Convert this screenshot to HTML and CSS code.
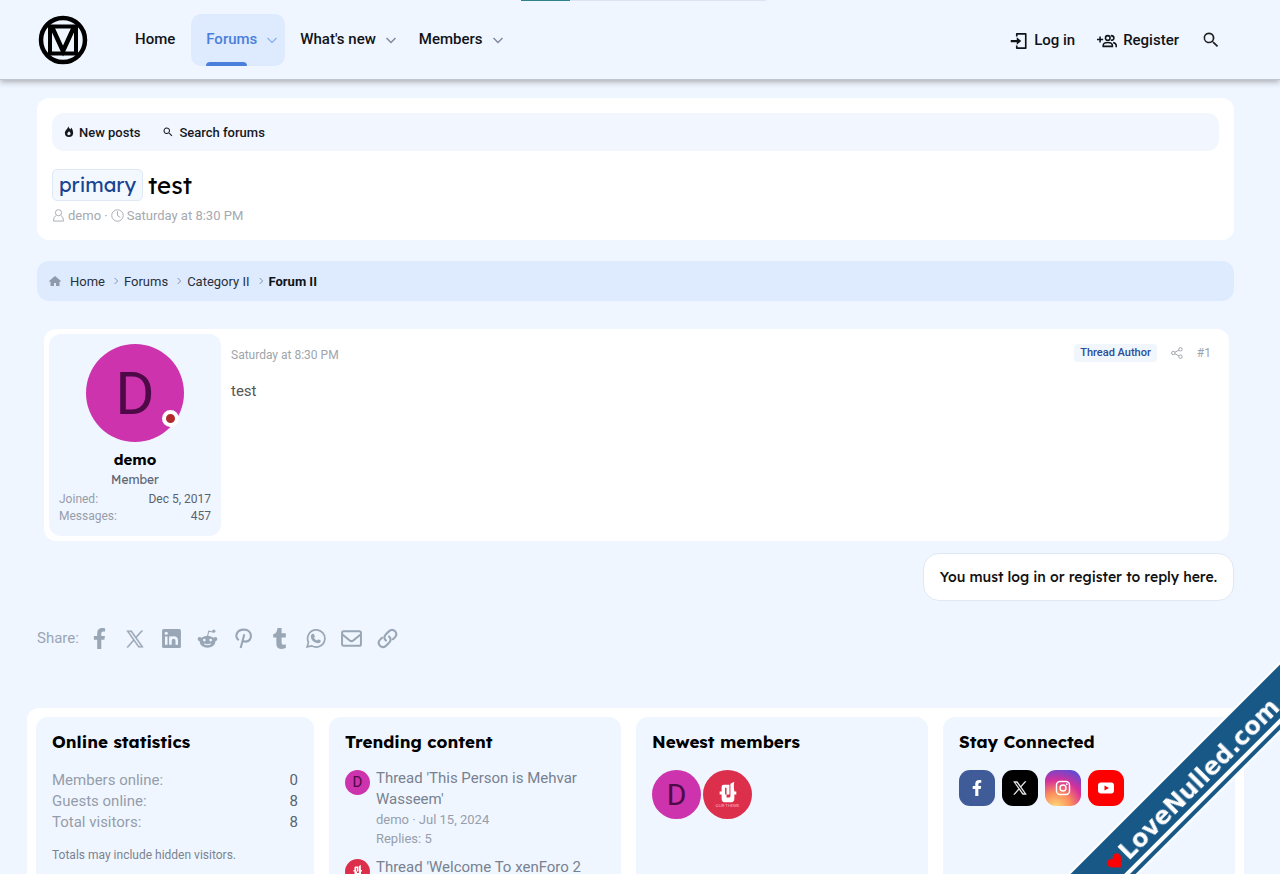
FILE: index.html
```html
<!DOCTYPE html>
<html lang="en">
<head>
<meta charset="utf-8">
<title>test | Forum II</title>
<link rel="stylesheet" href="styles.css">
</head>
<body>
<svg class="defs" aria-hidden="true">
  <defs>
    <symbol id="chev" viewBox="0 0 12 12"><path d="M1.500 4 6 8.500 10.500 4" fill="none" stroke="currentColor" stroke-width="1.500"/></symbol>
    <symbol id="search" viewBox="0 0 24 24"><path fill="currentColor" d="M9.500 3a6.500 6.500 0 0 1 5 10.700l.3.300h.8l5 5-1.500 1.500-5-5v-.8l-.3-.3A6.500 6.500 0 1 1 9.500 3m0 2a4.500 4.500 0 1 0 0 9 4.500 4.500 0 0 0 0-9"/></symbol>
    <symbol id="fb" viewBox="0 0 320 512"><path fill="currentColor" d="M279 288l14-93h-89v-60c0-25 12-50 52-50h41V7s-37-7-72-7C152 0 104 44 104 125v70H23v93h81v224h100V288z"/></symbol>
    <symbol id="x" viewBox="0 0 24 24"><path stroke="currentColor" stroke-width=".7" fill="currentColor" d="M14.100 10.300 22.300 1h-2l-7.100 8.100L7.500 1H1l8.600 12.200L1 23h2l7.500-8.600 6 8.600H23zM11.400 13.300l-.9-1.200L3.600 2.400h3l5.600 7.800.9 1.200 7.200 10.200h-3z"/></symbol>
    <symbol id="mark" viewBox="0 0 50 50"><path fill="#fff" d="M19 17q0-2 2-2h6v10h-3v3h3q1 0 1-2V14l4-2q-1 3 0 10h2v3h-2v4q0 4-4 4h-5q-4 0-4-4v-4h-2v-3h2z"/><path d="M22.500 18h1.500v7h-1.500z" fill="#dc2f4b"/></symbol>
  </defs>
</svg>

<header class="header">
  <a class="logo" href="#" aria-label="Forum home"><svg viewBox="0 0 50 50"><g fill="none" stroke="#000"><circle cx="25" cy="25" r="22" stroke-width="4.500"/><path d="M11 11.500h28M11 38.500h28M12 11v28M38 11v28" stroke-width="4"/><path d="M14 12l11 24 11-24" stroke-width="4.500"/></g></svg></a>
  <nav class="nav">
    <a class="nav-link" href="#">Home</a>
    <a class="nav-link active" href="#">Forums <svg class="chev"><use href="#chev"/></svg></a>
    <a class="nav-link" href="#">What's new <svg class="chev"><use href="#chev"/></svg></a>
    <a class="nav-link" href="#">Members <svg class="chev"><use href="#chev"/></svg></a>
  </nav>
  <div class="account">
    <a class="login" href="#"><svg viewBox="0 0 24 24"><path d="M9 6V2.500h12v19H9V18" fill="none" stroke="currentColor" stroke-width="2.200" stroke-linejoin="round"/><path d="M1 10.500h8V7l6 5-6 5v-3.500H1z" fill="currentColor"/></svg>Log in</a>
    <a class="register" href="#"><svg viewBox="0 0 26 20"><g fill="none" stroke="currentColor" stroke-width="2"><path d="M0 8h8M4 4v8"/><circle cx="14" cy="6" r="3"/><path d="M8 17v-1q0-4 6-4t6 4v1zM18 3q4 0 4 3t-4 3M21 12q4 1 4 4v2"/></g></svg>Register</a>
    <button class="icon-btn" aria-label="Search"><svg><use href="#search"/></svg></button>
  </div>
  <div class="progress"><span></span></div>
</header>

<main class="page">
  <section class="title-card">
    <div class="subnav">
      <a href="#"><svg viewBox="0 0 12 14"><path fill="currentColor" d="M5 0q1 3 3 4 0-1 1-2 2 3 2 6 0 5-5 5T1 8q0-2 2-4 2-2 2-4"/><path fill="#f1f6ff" d="M6 6q2 2 2 3t-2 2q-2 0-2-2 0-1 2-3"/></svg>New posts</a>
      <a href="#"><svg><use href="#search"/></svg>Search forums</a>
    </div>
    <h1><span class="prefix">primary</span><span>test</span></h1>
    <p class="byline">
      <svg viewBox="0 0 12 14"><g fill="none" stroke="currentColor"><circle cx="6" cy="4" r="3.300"/><path d="M3.500 7Q.6 8 .6 13h10.800q0-5-2.900-6"/></g></svg><span>demo ·</span>
      <svg viewBox="0 0 14 14"><g fill="none" stroke="currentColor"><circle cx="7" cy="7" r="6.200"/><path d="M7 2.500V7l3 2"/></g></svg><span>Saturday at 8:30 PM</span>
    </p>
  </section>

  <nav class="crumbs" aria-label="Breadcrumb">
    <svg class="home" viewBox="0 0 12 12"><path fill="currentColor" d="M6 1l6 5-1 1-.5-.5V11H7V8H5v3H1.500V6.500L1 7 0 6z"/></svg>
    <a href="#">Home</a><svg class="sep"><use href="#chev"/></svg>
    <a href="#">Forums</a><svg class="sep"><use href="#chev"/></svg>
    <a href="#">Category II</a><svg class="sep"><use href="#chev"/></svg>
    <a class="current" href="#">Forum II</a>
  </nav>

  <article class="post">
    <aside class="user">
      <div class="avatar large">D<i class="status"></i></div>
      <a class="name" href="#">demo</a>
      <span class="rank">Member</span>
      <dl><dt>Joined:</dt><dd>Dec 5, 2017</dd><dt>Messages:</dt><dd>457</dd></dl>
    </aside>
    <div class="post-main">
      <div class="post-head">
        <time>Saturday at 8:30 PM</time>
        <div class="post-tools">
          <span class="author">Thread Author</span>
          <a href="#" aria-label="Share post"><svg viewBox="0 0 12 12"><g fill="none" stroke="currentColor"><circle cx="9.500" cy="2.300" r="1.700"/><circle cx="2.300" cy="6" r="1.700"/><circle cx="9.500" cy="9.700" r="1.700"/><path d="M4 5.200l4-2.100M4 6.800l4 2.100"/></g></svg></a>
          <a href="#">#1</a>
        </div>
      </div>
      <p>test</p>
    </div>
  </article>

  <div class="reply"><a href="#">You must log in or register to reply here.</a></div>

  <div class="share">
    <span>Share:</span>
    <a href="#" aria-label="Facebook"><svg><use href="#fb"/></svg></a>
    <a class="share-x" href="#" aria-label="X"><svg><use href="#x"/></svg></a>
    <a href="#" aria-label="LinkedIn"><svg viewBox="0 0 20 20"><rect x="1" y="1" width="18" height="18" rx="1.500" fill="currentColor"/><circle cx="5" cy="5" r="1.500" fill="#f0f6ff"/><path d="M5 8v8M9 16V8" stroke="#f0f6ff" stroke-width="2.400"/><path d="M9 12q0-3 3-3t3 3v4" fill="none" stroke="#f0f6ff" stroke-width="2.400"/></svg></a>
    <a href="#" aria-label="Reddit"><svg viewBox="0 0 20 20"><g fill="currentColor"><ellipse cx="10" cy="13" rx="7.500" ry="5.700"/><circle cx="2.600" cy="10.500" r="2"/><circle cx="17.400" cy="10.500" r="2"/><circle cx="16" cy="3" r="1.500"/></g><path d="M10 8l1.200-5 4 .8" fill="none" stroke="currentColor"/><g fill="#f0f6ff"><circle cx="7" cy="11.500" r="1.300"/><circle cx="13" cy="11.500" r="1.300"/></g><path d="M7 15q3 2 6 0" stroke="#f0f6ff" fill="none"/></svg></a>
    <a href="#" aria-label="Pinterest"><svg viewBox="0 0 20 20"><path d="M5.500 11.500C1 8 3.500 1.500 10.500 1.500c8.500 0 8.500 11.500 1.500 11.500-2 0-3-1.500-3-1.500M10.800 6 7.300 19" fill="none" stroke="currentColor" stroke-width="2"/></svg></a>
    <a href="#" aria-label="Tumblr"><svg viewBox="0 0 20 20"><path fill="currentColor" d="M8 0h4v5h4v4h-4v5q0 3 4 1.500V19q-9 3-9-4V9H4V6q4-1 4-6"/></svg></a>
    <a href="#" aria-label="WhatsApp"><svg viewBox="0 0 20 20"><path d="M2 18l1.300-4.500A8.200 8.200 0 1 1 6.500 17z" fill="none" stroke="currentColor" stroke-width="1.600"/><path fill="currentColor" d="M7 5.500l1.500.2 1 2.300-1 1.200q1 2 3 2.800l1.200-1.200 2.300 1.200q0 2.500-2.500 2.500-6.500-1-7-6.500 0-1.500 1.500-2.500"/></svg></a>
    <a href="#" aria-label="Email"><svg viewBox="0 0 20 20"><g fill="none" stroke="currentColor" stroke-width="1.900"><rect x="1" y="3" width="18" height="14" rx="1.500"/><path d="M1 6l7.500 6q1.500 1 3 0L19 6"/></g></svg></a>
    <a href="#" aria-label="Link"><svg viewBox="0 0 20 20"><g fill="none" stroke="currentColor" stroke-width="2" stroke-linecap="round"><path d="M8.500 12q-3-3 0-6l3-3q3-2.500 5.700 0 2.500 3 0 5.700l-2 2"/><path d="M11.500 8q3 3 0 6l-3 3q-3 2.500-5.700 0-2.500-3 0-5.700l2-2"/></g></svg></a>
  </div>
</main>

<footer class="widgets">
  <section class="widget">
    <h2>Online statistics</h2>
    <dl class="stats"><dt>Members online:</dt><dd>0</dd><dt>Guests online:</dt><dd>8</dd><dt>Total visitors:</dt><dd>8</dd></dl>
    <p class="note">Totals may include hidden visitors.</p>
  </section>
  <section class="widget">
    <h2>Trending content</h2>
    <ul class="trending">
      <li><span class="avatar small">D</span><div><a href="#">Thread 'This Person is Mehvar Wasseem'</a><small>demo · Jul 15, 2024</small><small>Replies: 5</small></div></li>
      <li><span class="avatar small red"><svg><use href="#mark"/></svg></span><div><a href="#">Thread 'Welcome To xenForo 2</a></div></li>
    </ul>
  </section>
  <section class="widget">
    <h2>Newest members</h2>
    <div class="members"><a class="avatar medium" href="#">D</a><a class="avatar medium red" href="#"><svg><use href="#mark"/></svg><span class="brand">OUR THEME</span></a></div>
  </section>
  <section class="widget">
    <h2>Stay Connected</h2>
    <div class="social">
      <a class="s-fb" href="#" aria-label="Facebook"><svg><use href="#fb"/></svg></a>
      <a class="s-x" href="#" aria-label="X"><svg><use href="#x"/></svg></a>
      <a class="s-ig" href="#" aria-label="Instagram"><svg viewBox="0 0 16 16"><g fill="none" stroke="currentColor" stroke-width="1.400"><rect x="1.500" y="1.500" width="13" height="13" rx="3.500"/><circle cx="8" cy="8" r="3"/></g><circle cx="11.800" cy="4.200" r=".9" fill="currentColor"/></svg></a>
      <a class="s-yt" href="#" aria-label="YouTube"><svg viewBox="0 0 16 16"><rect x="0" y="2.500" width="16" height="11" rx="3" fill="currentColor"/><path d="M6.500 5.500v5L11 8z" fill="#f00"/></svg></a>
    </div>
  </section>
</footer>

<div class="ribbon"><svg viewBox="0 0 20 18"><path fill="#f00" d="M10 17 2 9Q-1 3 4 1q4-1 6 3 2-4 6-3 5 2 2 8z"/></svg><span>LoveNulled.com</span></div>
</body>
</html>
```
FILE: styles.css
```css
* { box-sizing: border-box; }
body {
  margin: 0;
  height: 100vh;
  overflow: hidden;
  position: relative;
  background: #f0f6ff;
  color: #555b66;
  font: 15px/21px Roboto, sans-serif;
}
a { color: inherit; text-decoration: none; }
h1, h2, p, dl, dd, ul { margin: 0; padding: 0; }
svg { flex: none; }
.defs { position: absolute; width: 0; height: 0; }

.header {
  position: relative;
  display: flex;
  align-items: center;
  height: 80px;
  padding: 0 59px 0 38px;
  border-bottom: 1px solid #bfc5d1;
  box-shadow: 0 2px 6px #0000004d;
  color: #101318;
  font-weight: 500;
}
.logo { display: flex; }
.logo svg { width: 50px; height: 50px; }
.nav { display: flex; margin-left: 32px; }
.nav-link { display: flex; align-items: center; gap: 9px; height: 52px; padding: 0 7px 0 15px; }
.nav-link:first-child { padding-right: 15px; }
.nav-link.active {
  position: relative;
  margin-left: 1px;
  border-radius: 10px;
  background: #deebff;
  color: #4b7fdc;
}
.nav-link.active::after {
  content: "";
  position: absolute;
  left: 15px;
  bottom: 0;
  width: 41px;
  height: 4px;
  border-radius: 4px 4px 0 0;
  background: #4b7fdc;
}
.chev { width: 12px; height: 12px; color: #7f8a9c; }
.active .chev { color: #92b4ef; }
.account { display: flex; align-items: center; margin-left: auto; gap: 22px; }
.account a { display: flex; align-items: center; gap: 6px; padding-top: 2px; }
.login svg { width: 18px; height: 18px; }
.register svg { width: 20px; height: 16px; }
.icon-btn { display: flex; padding: 0; border: 0; background: none; color: #222; }
.icon-btn svg { width: 20px; height: 20px; }
.progress { position: absolute; top: 0; left: 521px; width: 245px; height: 1px; background: #dbe4f2; }
.progress span { display: block; width: 49px; height: 1px; background: #2f8391; }

.page { padding: 18px 46px 0 37px; }
.title-card { padding: 15px; height: 142px; border-radius: 12px; background: #fff; }
.subnav {
  display: flex;
  align-items: center;
  gap: 22px;
  height: 38px;
  padding: 0 12px;
  border-radius: 12px;
  background: #f1f6ff;
  color: #15181d;
  font-size: 13px;
  font-weight: 500;
}
.subnav a { display: flex; align-items: center; gap: 5px; }
.subnav svg { width: 12px; height: 12px; }
.subnav a:first-child svg { width: 10px; }
h1 {
  display: flex;
  align-items: center;
  gap: 5px;
  margin-top: 18px;
  color: #000;
  font: 400 24px/32px Lexend, "Noto Sans", sans-serif;
}
.prefix {
  padding: 0 6px;
  border: 1px solid #dfe9f5;
  border-radius: 5px;
  background: #f3f8ff;
  color: #184491;
  font-size: 20px;
  line-height: 30px;
}
.byline { display: flex; align-items: center; gap: 3px; margin-top: 4px; color: #a5a9b0; font-size: 13px; }
.byline svg { width: 13px; height: 13px; }

.crumbs {
  display: flex;
  align-items: center;
  height: 40px;
  margin-top: 21px;
  padding: 0 12px;
  border-radius: 12px;
  background: #deebff;
  color: #2a303b;
  font-size: 13px;
}
.crumbs .home { width: 12px; height: 12px; margin-right: 9px; color: #8f9bac; }
.sep { width: 8px; height: 8px; margin: 0 4px 0 7px; color: #8693a7; transform: rotate(-90deg); }
.crumbs .current { color: #0f1319; font-weight: 700; }

.post { display: flex; margin: 28px 5px 0 7px; padding: 5px; border-radius: 12px; background: #fff; min-height: 212px; }
.user {
  display: flex;
  flex-direction: column;
  align-items: center;
  width: 172px;
  padding: 10px;
  border-radius: 12px;
  background: #f0f6ff;
}
.avatar {
  position: relative;
  display: flex;
  flex: none;
  align-items: center;
  justify-content: center;
  border-radius: 50%;
  background: #cc33ad;
  color: #4e0a47;
}
.large { width: 98px; height: 98px; font-size: 60px; }
.medium { width: 49px; height: 49px; font-size: 30px; }
.small { width: 25px; height: 25px; font-size: 15px; }
.red { background: #dc2f4b; overflow: hidden; }
.red svg { width: 100%; height: 100%; }
.brand { position: absolute; bottom: 8px; left: 0; right: 0; color: #fbd; font: 400 4px/10px Inter, sans-serif; text-align: center; }
.status { position: absolute; right: 5px; bottom: 15px; width: 17px; height: 17px; border: 4px solid #fff; border-radius: 50%; background: #b02a2e; }
.name { margin-top: 7px; color: #000; font: 700 15px/21px Lexend, "Noto Sans", sans-serif; }
.rank { color: #5e6673; font: 400 12px/19px Lexend, "Noto Sans", sans-serif; }
.user dl { display: grid; grid-template-columns: auto auto; width: 100%; margin-top: 2px; font-size: 12px; line-height: 17px; }
dt { color: #959daa; }
dd { color: #59626f; text-align: right; }
.post-main { flex: 1; padding: 9px 13px 0 10px; }
.post-head { display: flex; justify-content: space-between; height: 24px; color: #a0a4ab; font-size: 12px; line-height: 24px; }
.post-tools { display: flex; align-items: center; gap: 14px; height: 20px; }
.post-tools svg { display: block; width: 12px; height: 12px; }
.author { padding: 0 6px; border-radius: 4px; background: #f1f6fd; color: #294d96; font-weight: 500; font-size: 11px; line-height: 18px; }
.post-main p { margin-top: 14px; color: #555; }

.reply { display: flex; justify-content: flex-end; margin-top: 12px; }
.reply a {
  padding: 0 16px;
  border: 1px solid #e1e8f3;
  border-radius: 16px;
  background: #fff;
  color: #111;
  font: 500 14px/46px Lexend, "Noto Sans", sans-serif;
}
.share { display: flex; align-items: center; gap: 15px; height: 21px; margin-top: 27px; color: #99a6b6; }
.share span { margin-right: -5px; }
.share a { display: flex; justify-content: center; align-items: center; width: 21px; }
.share svg { width: 21px; height: 21px; }
.share .share-x svg { width: 18px; height: 18px; }

.widgets {
  display: grid;
  grid-template-columns: 277fr 291fr 291fr 291fr;
  gap: 15px;
  margin: 59px 36px 0 27px;
  padding: 9px;
  border-radius: 12px 12px 0 0;
  background: #fff;
}
.widget { min-height: 200px; padding: 14px 16px; border-radius: 12px; background: #f0f6ff; }
h2 { margin-bottom: 18px; color: #000; font: 700 17px/21px Lexend, "Noto Sans", sans-serif; }
.stats { display: grid; grid-template-columns: 1fr auto; }
.note { margin-top: 12px; color: #7a8390; font-size: 12px; }
.trending { display: grid; gap: 9px; margin-top: -2px; list-style: none; }
.trending li { display: flex; gap: 6px; color: #78818f; }
.trending .avatar { margin-top: 2px; }
.trending a { display: block; }
.trending small { display: block; color: #969eab; font-size: 13px; line-height: 19px; }
.members { display: flex; gap: 2px; }
.social { display: flex; gap: 7px; }
.social a { display: flex; align-items: center; justify-content: center; width: 36px; height: 36px; border-radius: 11px; color: #fff; }
.social svg { width: 16px; height: 16px; }
.social .s-x svg { width: 14px; height: 14px; }
.s-fb { background: #3f5b98; }
.s-x { background: #000; }
.s-ig { background: radial-gradient(circle at 30% 107%, #ffe17a 0%, #fa8c5c 35%, #d6309a 62%, #4a50dc 95%); }
.s-yt { background: #f00; }

.ribbon {
  position: fixed;
  right: -104px;
  bottom: 68px;
  display: flex;
  align-items: center;
  justify-content: center;
  gap: 1px;
  width: 400px;
  height: 40px;
  padding: 10px 0 0 12px;
  border-top: 2px solid #fff;
  background: #185887;
  box-shadow: 0 4px #fff, 0 8px #185887, 0 10px #fff;
  color: #fff;
  font: 700 24px/28px "DejaVu Sans", sans-serif;
  transform: rotate(-45deg);
}
.ribbon svg { width: 18px; height: 16px; }
```
